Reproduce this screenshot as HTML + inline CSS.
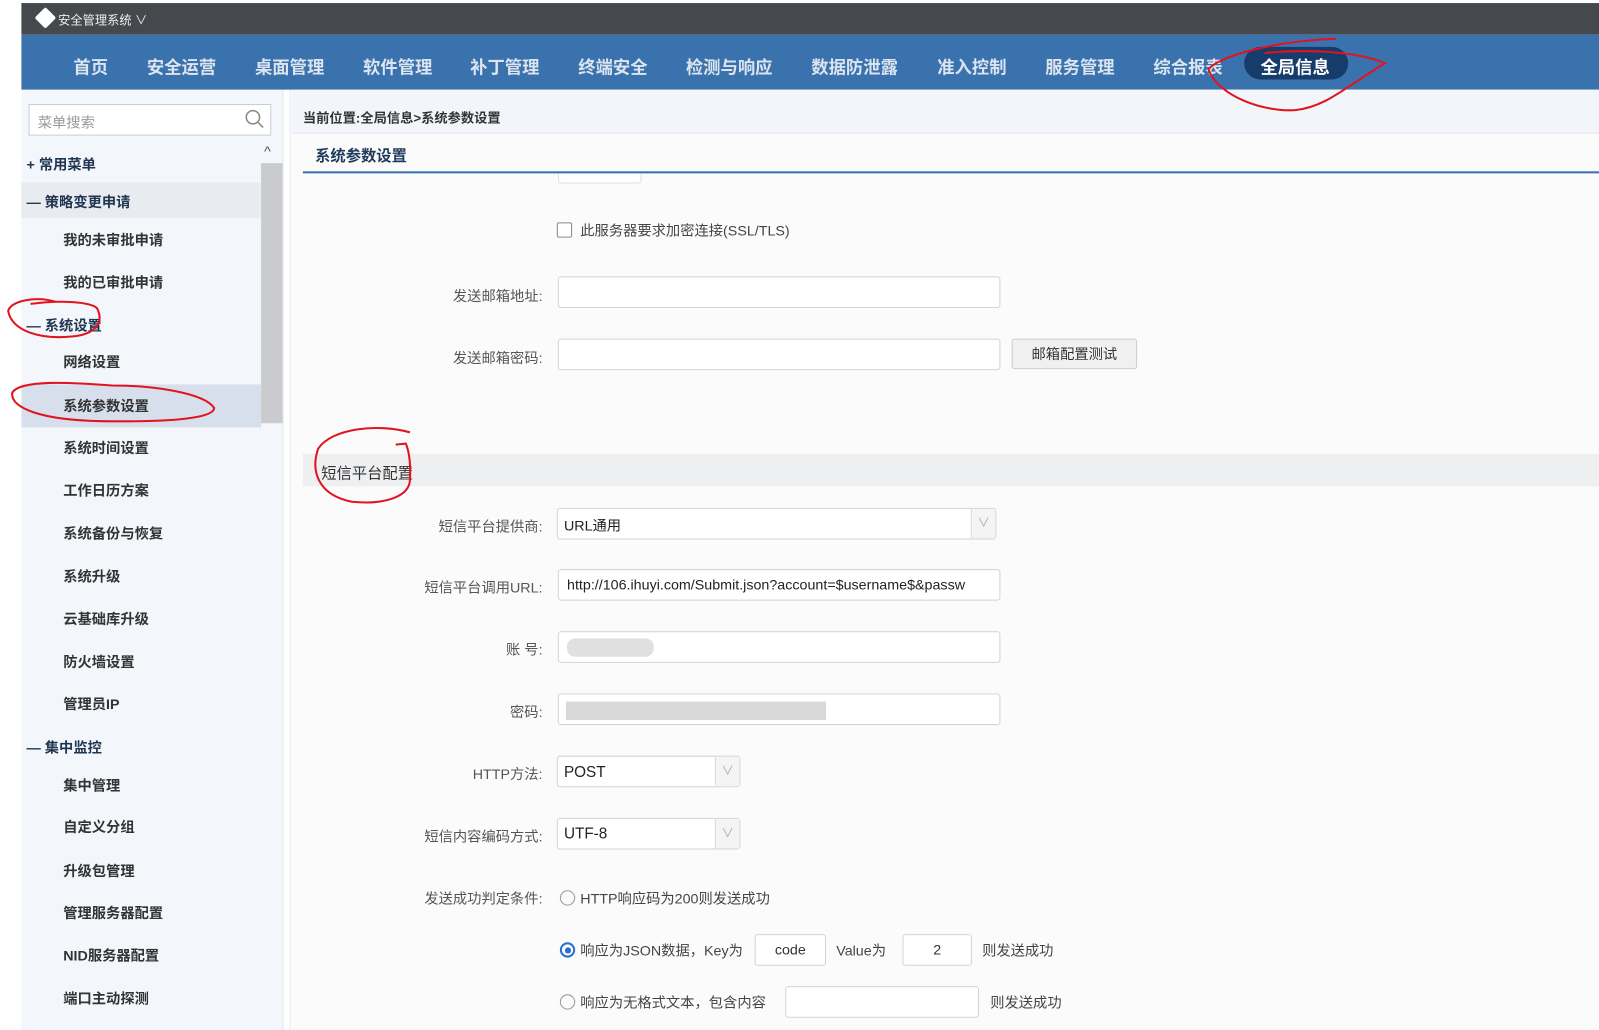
<!DOCTYPE html>
<html><head><meta charset="utf-8"><style>
*{margin:0;padding:0;box-sizing:border-box}
body{width:1599px;height:1030px;overflow:hidden;background:#fff;font-family:"Liberation Sans","Noto Sans CJK SC",sans-serif;color:#333}
#w{position:absolute;left:0;top:0;width:1568px;height:1010px;transform:scale(1.0198);transform-origin:0 0}
.a{position:absolute;white-space:nowrap}
.top{left:21px;top:3px;width:1547px;height:31px;background:#45494e}
.nav{left:21px;top:34px;width:1547px;height:54px;background:#3a72ae}
.nv{top:52px;font-size:17px;font-weight:bold;color:#dbe4ef;transform:translateX(-50%)}
.side{left:21px;top:88px;width:256px;height:922px;background:#f3f6fb}
.si{font-size:14px;color:#333;left:62px;font-weight:bold;}
.sh{font-size:14px;font-weight:bold;color:#1f3550;left:26px}
.lbl{font-size:14px;color:#555;right:1036px;text-align:right}
.inp{background:#fff;border:1px solid #d0d4da;border-radius:3px;height:31px}
.sel:after{content:"∨";position:absolute;right:0;top:0;width:23px;height:100%;border-left:1px solid #ddd;background:#f4f4f4;color:#aaa;font-size:12px;text-align:center;line-height:29px}
.txt{font-size:14px;color:#222}
.rad{width:15px;height:15px;border:1.5px solid #999;border-radius:50%}
</style></head><body><div id="w">
<div class="a top"></div>
<div class="a" style="left:37px;top:10px;width:15px;height:15px;background:#fff;transform:rotate(45deg);border-radius:2px"></div>
<div class="a" style="left:57px;top:11px;font-size:12px;color:#eee">安全管理系统 ∨</div>
<div class="a nav"></div>
<div class="a" style="left:1220px;top:46px;width:102px;height:32px;border-radius:16px;background:#163c6b"></div>
<div class="a nv" style="left:89px">首页</div>
<div class="a nv" style="left:178px">安全运营</div>
<div class="a nv" style="left:284px">桌面管理</div>
<div class="a nv" style="left:390px">软件管理</div>
<div class="a nv" style="left:495px">补丁管理</div>
<div class="a nv" style="left:601px">终端安全</div>
<div class="a nv" style="left:715px">检测与响应</div>
<div class="a nv" style="left:838px">数据防泄露</div>
<div class="a nv" style="left:953px">准入控制</div>
<div class="a nv" style="left:1059px">服务管理</div>
<div class="a nv" style="left:1165px">综合报表</div>
<div class="a nv" style="left:1270px;color:#fff">全局信息</div>

<div class="a side"></div>
<div class="a" style="left:277px;top:88px;width:8px;height:922px;background:#fff;border-left:1px solid #e2e5ea;border-right:1px solid #e2e5ea"></div>
<div class="a" style="left:28px;top:102px;width:238px;height:31px;background:#fff;border:1px solid #ccd;"></div>
<div class="a" style="left:37px;top:110px;font-size:14px;color:#999">菜单搜索</div>
<svg class="a" style="left:240px;top:107px" width="20" height="20"><circle cx="8" cy="8" r="6.5" fill="none" stroke="#888" stroke-width="1.5"/><path d="M13 13l5 5" stroke="#888" stroke-width="1.5"/></svg>
<div class="a" style="left:256px;top:160px;width:21px;height:255px;background:#c9cbcf"></div>
<div class="a" style="left:259px;top:140px;font-size:14px;color:#555">^</div>
<div class="a" style="left:21px;top:179px;width:235px;height:35px;background:#e8ebf0"></div>
<div class="a" style="left:21px;top:377px;width:235px;height:42px;background:#d8dfec"></div>
<div class="a sh" style="top:151px">+ 常用菜单</div>
<div class="a sh" style="top:188px">— 策略变更申请</div>
<div class="a si" style="top:225px">我的未审批申请</div>
<div class="a si" style="top:267px">我的已审批申请</div>
<div class="a sh" style="top:309px">— 系统设置</div>
<div class="a si" style="top:345px">网络设置</div>
<div class="a si" style="top:388px">系统参数设置</div>
<div class="a si" style="top:429px">系统时间设置</div>
<div class="a si" style="top:471px">工作日历方案</div>
<div class="a si" style="top:513px">系统备份与恢复</div>
<div class="a si" style="top:555px">系统升级</div>
<div class="a si" style="top:597px">云基础库升级</div>
<div class="a si" style="top:639px">防火墙设置</div>
<div class="a si" style="top:680px">管理员IP</div>
<div class="a sh" style="top:723px">— 集中监控</div>
<div class="a si" style="top:760px">集中管理</div>
<div class="a si" style="top:801px">自定义分组</div>
<div class="a si" style="top:844px">升级包管理</div>
<div class="a si" style="top:885px">管理服务器配置</div>
<div class="a si" style="top:927px">NID服务器配置</div>
<div class="a si" style="top:969px">端口主动探测</div>

<div class="a" style="left:286px;top:88px;width:1282px;height:922px;background:#fbfbfc"></div>
<div class="a" style="left:286px;top:88px;width:1282px;height:43px;background:#f2f5fa;border-bottom:1px solid #e3e6ea"></div>
<div class="a" style="left:297px;top:105px;font-size:13px;color:#333;font-weight:bold">当前位置:全局信息&gt;系统参数设置</div>
<div class="a" style="left:309px;top:142px;font-size:15px;color:#1f3a5c;font-weight:bold">系统参数设置</div>
<div class="a" style="left:547px;top:170px;width:82px;height:10px;background:#fff;border:1px solid #ddd;border-top:none;border-radius:0 0 3px 3px"></div>
<div class="a" style="left:297px;top:168px;width:1271px;height:2px;background:#3a72ae"></div>

<div class="a" style="left:546px;top:218px;width:15px;height:15px;border:1.5px solid #888;border-radius:2px;background:#fff"></div>
<div class="a txt" style="left:569px;top:216px;color:#444">此服务器要求加密连接(SSL/TLS)</div>
<div class="a lbl" style="top:280px">发送邮箱地址:</div>
<div class="a inp" style="left:547px;top:271px;width:434px"></div>
<div class="a lbl" style="top:341px">发送邮箱密码:</div>
<div class="a inp" style="left:547px;top:332px;width:434px"></div>
<div class="a" style="left:992px;top:332px;width:123px;height:30px;background:#f0f0f0;border:1px solid #ccc;border-radius:3px;font-size:14px;text-align:center;line-height:28px;color:#333">邮箱配置测试</div>

<div class="a" style="left:297px;top:445px;width:1271px;height:32px;background:#eeeff1"></div>
<div class="a" style="left:315px;top:453px;font-size:15px;color:#333">短信平台配置</div>

<div class="a lbl" style="top:506px">短信平台提供商:</div>
<div class="a inp sel" style="left:546px;top:498px;width:431px"></div>
<div class="a txt" style="left:553px;top:505px">URL通用</div>
<div class="a lbl" style="top:566px">短信平台调用URL:</div>
<div class="a inp" style="left:547px;top:558px;width:434px;overflow:hidden"><span class="txt" style="position:absolute;left:8px;top:6px;white-space:nowrap">http://106.ihuyi.com/Submit.json?account=$username$&amp;passw</span></div>
<div class="a lbl" style="top:627px">账 号:</div>
<div class="a inp" style="left:547px;top:619px;width:434px"></div>
<div class="a" style="left:556px;top:626px;width:85px;height:18px;background:#e0e0e0;border-radius:8px"></div>
<div class="a lbl" style="top:688px">密码:</div>
<div class="a inp" style="left:547px;top:680px;width:434px"></div>
<div class="a" style="left:555px;top:688px;width:255px;height:18px;background:#d8d8d8"></div>

<div class="a lbl" style="top:749px">HTTP方法:</div>
<div class="a inp sel" style="left:546px;top:741px;width:180px"></div>
<div class="a txt" style="left:553px;top:749px;font-size:15px">POST</div>
<div class="a lbl" style="top:810px">短信内容编码方式:</div>
<div class="a inp sel" style="left:546px;top:802px;width:180px"></div>
<div class="a txt" style="left:553px;top:809px;font-size:15px">UTF-8</div>

<div class="a lbl" style="top:871px">发送成功判定条件:</div>
<div class="a rad" style="left:549px;top:873px"></div>
<div class="a txt" style="left:569px;top:871px;color:#444">HTTP响应码为200则发送成功</div>
<div class="a rad" style="left:549px;top:924px;border:2px solid #2a6fd0"><div style="position:absolute;left:2.5px;top:2.5px;width:6px;height:6px;border-radius:50%;background:#2a6fd0"></div></div>
<div class="a txt" style="left:569px;top:922px;color:#444">响应为JSON数据，Key为</div>
<div class="a inp" style="left:740px;top:916px;width:70px;text-align:center;line-height:29px;font-size:14px">code</div>
<div class="a txt" style="left:820px;top:922px;color:#444">Value为</div>
<div class="a inp" style="left:885px;top:916px;width:68px;text-align:center;line-height:29px;font-size:14px">2</div>
<div class="a txt" style="left:963px;top:922px;color:#444">则发送成功</div>
<div class="a rad" style="left:549px;top:975px"></div>
<div class="a txt" style="left:569px;top:973px;color:#444">响应为无格式文本，包含内容</div>
<div class="a inp" style="left:770px;top:967px;width:190px"></div>
<div class="a txt" style="left:971px;top:973px;color:#444">则发送成功</div>

<svg class="a" style="left:0;top:0" width="1568" height="1010" fill="none" stroke="#e0141e" stroke-width="2">
<path d="M1310 38 C1250 40 1195 55 1185 68 C1195 95 1240 110 1270 108 C1300 105 1320 85 1358 62 C1330 50 1280 48 1240 52"/>
<path d="M55 296 C35 290 10 295 8 305 C12 325 40 333 70 330 C95 328 102 315 95 302 C88 296 60 294 30 298"/>
<path d="M110 378 C70 375 20 372 12 385 C10 400 40 412 100 413 C170 414 210 410 210 400 C200 385 150 378 110 378"/>
<path d="M402 424 C370 415 325 420 312 440 C305 460 310 485 345 492 C375 495 402 488 402 470 C403 450 400 440 398 435 L388 436"/>
</svg>
</div></body></html>
